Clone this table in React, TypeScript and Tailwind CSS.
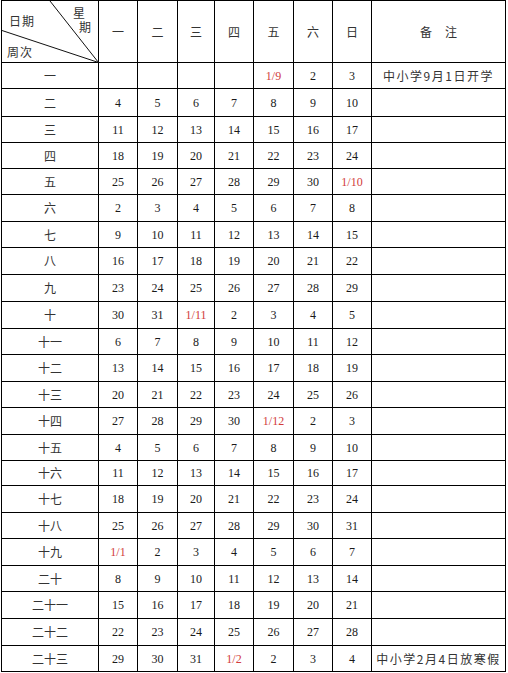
import React from "react";

type Cell = string | { t: string; red: true };
const R = (t: string): Cell => ({ t, red: true });

const rows: { label: string; h: string; cells: Cell[]; note?: string }[] = [
  { label: "一", h: "h-[26px]", cells: ["", "", "", "", R("1/9"), "2", "3"], note: "中小学9月1日开学" },
  { label: "二", h: "h-[28px]", cells: ["4", "5", "6", "7", "8", "9", "10"] },
  { label: "三", h: "h-[26px]", cells: ["11", "12", "13", "14", "15", "16", "17"] },
  { label: "四", h: "h-[26px]", cells: ["18", "19", "20", "21", "22", "23", "24"] },
  { label: "五", h: "h-[26px]", cells: ["25", "26", "27", "28", "29", "30", R("1/10")] },
  { label: "六", h: "h-[27px]", cells: ["2", "3", "4", "5", "6", "7", "8"] },
  { label: "七", h: "h-[26px]", cells: ["9", "10", "11", "12", "13", "14", "15"] },
  { label: "八", h: "h-[27px]", cells: ["16", "17", "18", "19", "20", "21", "22"] },
  { label: "九", h: "h-[27px]", cells: ["23", "24", "25", "26", "27", "28", "29"] },
  { label: "十", h: "h-[27px]", cells: ["30", "31", R("1/11"), "2", "3", "4", "5"] },
  { label: "十一", h: "h-[26px]", cells: ["6", "7", "8", "9", "10", "11", "12"] },
  { label: "十二", h: "h-[27px]", cells: ["13", "14", "15", "16", "17", "18", "19"] },
  { label: "十三", h: "h-[26px]", cells: ["20", "21", "22", "23", "24", "25", "26"] },
  { label: "十四", h: "h-[27px]", cells: ["27", "28", "29", "30", R("1/12"), "2", "3"] },
  { label: "十五", h: "h-[26px]", cells: ["4", "5", "6", "7", "8", "9", "10"] },
  { label: "十六", h: "h-[25px]", cells: ["11", "12", "13", "14", "15", "16", "17"] },
  { label: "十七", h: "h-[27px]", cells: ["18", "19", "20", "21", "22", "23", "24"] },
  { label: "十八", h: "h-[26px]", cells: ["25", "26", "27", "28", "29", "30", "31"] },
  { label: "十九", h: "h-[27px]", cells: [R("1/1"), "2", "3", "4", "5", "6", "7"] },
  { label: "二十", h: "h-[26px]", cells: ["8", "9", "10", "11", "12", "13", "14"] },
  { label: "二十一", h: "h-[27px]", cells: ["15", "16", "17", "18", "19", "20", "21"] },
  { label: "二十二", h: "h-[27px]", cells: ["22", "23", "24", "25", "26", "27", "28"] },
  { label: "二十三", h: "h-[26px]", cells: ["29", "30", "31", R("1/2"), "2", "3", "4"], note: "中小学2月4日放寒假" },
];

const grid = "grid grid-cols-[97px_39px_40px_37px_39px_40px_39px_39px_134px]";
const cjk = "[font-family:'Noto_Sans_CJK_SC',sans-serif] text-[#333]";
const num = "[font-family:'Liberation_Serif','Noto_Sans_CJK_SC',serif]";
const cell = "border-r border-b border-black flex items-center justify-center";

const days = ["一", "二", "三", "四", "五", "六", "日"];

export default function App() {
  return (
    <div className="w-[508px] h-[673px] bg-white text-[12px] text-[#1a1a1a]">
      <div className="ml-[1px] w-[505px] border-l border-t border-black">
        <div className={`${grid} h-[62px]`}>
          <div className={`${cell} relative ${cjk} leading-none`}>
            <svg className="absolute left-0 top-0" width="97" height="62" viewBox="0 0 97 62">
              <line x1="48" y1="0" x2="96.5" y2="61.5" stroke="#111" strokeWidth="1" />
              <line x1="0" y1="29.5" x2="96.5" y2="61.5" stroke="#111" strokeWidth="1" />
            </svg>
            <span className="absolute left-[7px] top-[14px] tracking-[1px]">日期</span>
            <span className="absolute left-[71px] top-[6px]">星</span>
            <span className="absolute left-[77px] top-[20px]">期</span>
            <span className="absolute left-[5px] top-[45px] tracking-[1px]">周次</span>
          </div>
          {days.map((d) => (
            <div key={d} className={`${cell} ${cjk}`}>
              {d}
            </div>
          ))}
          <div className={`${cell} ${cjk} gap-[13px]`}>
            <span>备</span>
            <span>注</span>
          </div>
        </div>
        {rows.map((r) => (
          <div key={r.label} className={`${grid} ${r.h}`}>
            <div className={`${cell} ${cjk}`}>{r.label}</div>
            {r.cells.map((c, i) => {
              const red = typeof c !== "string";
              const t = typeof c === "string" ? c : c.t;
              return (
                <div key={i} className={`${cell} ${num} ${red ? "text-[#d23c3c]" : ""}`}>
                  {t}
                </div>
              );
            })}
            <div className={`${cell} ${cjk} tracking-[1.5px]`}>{r.note ?? ""}</div>
          </div>
        ))}
      </div>
    </div>
  );
}
